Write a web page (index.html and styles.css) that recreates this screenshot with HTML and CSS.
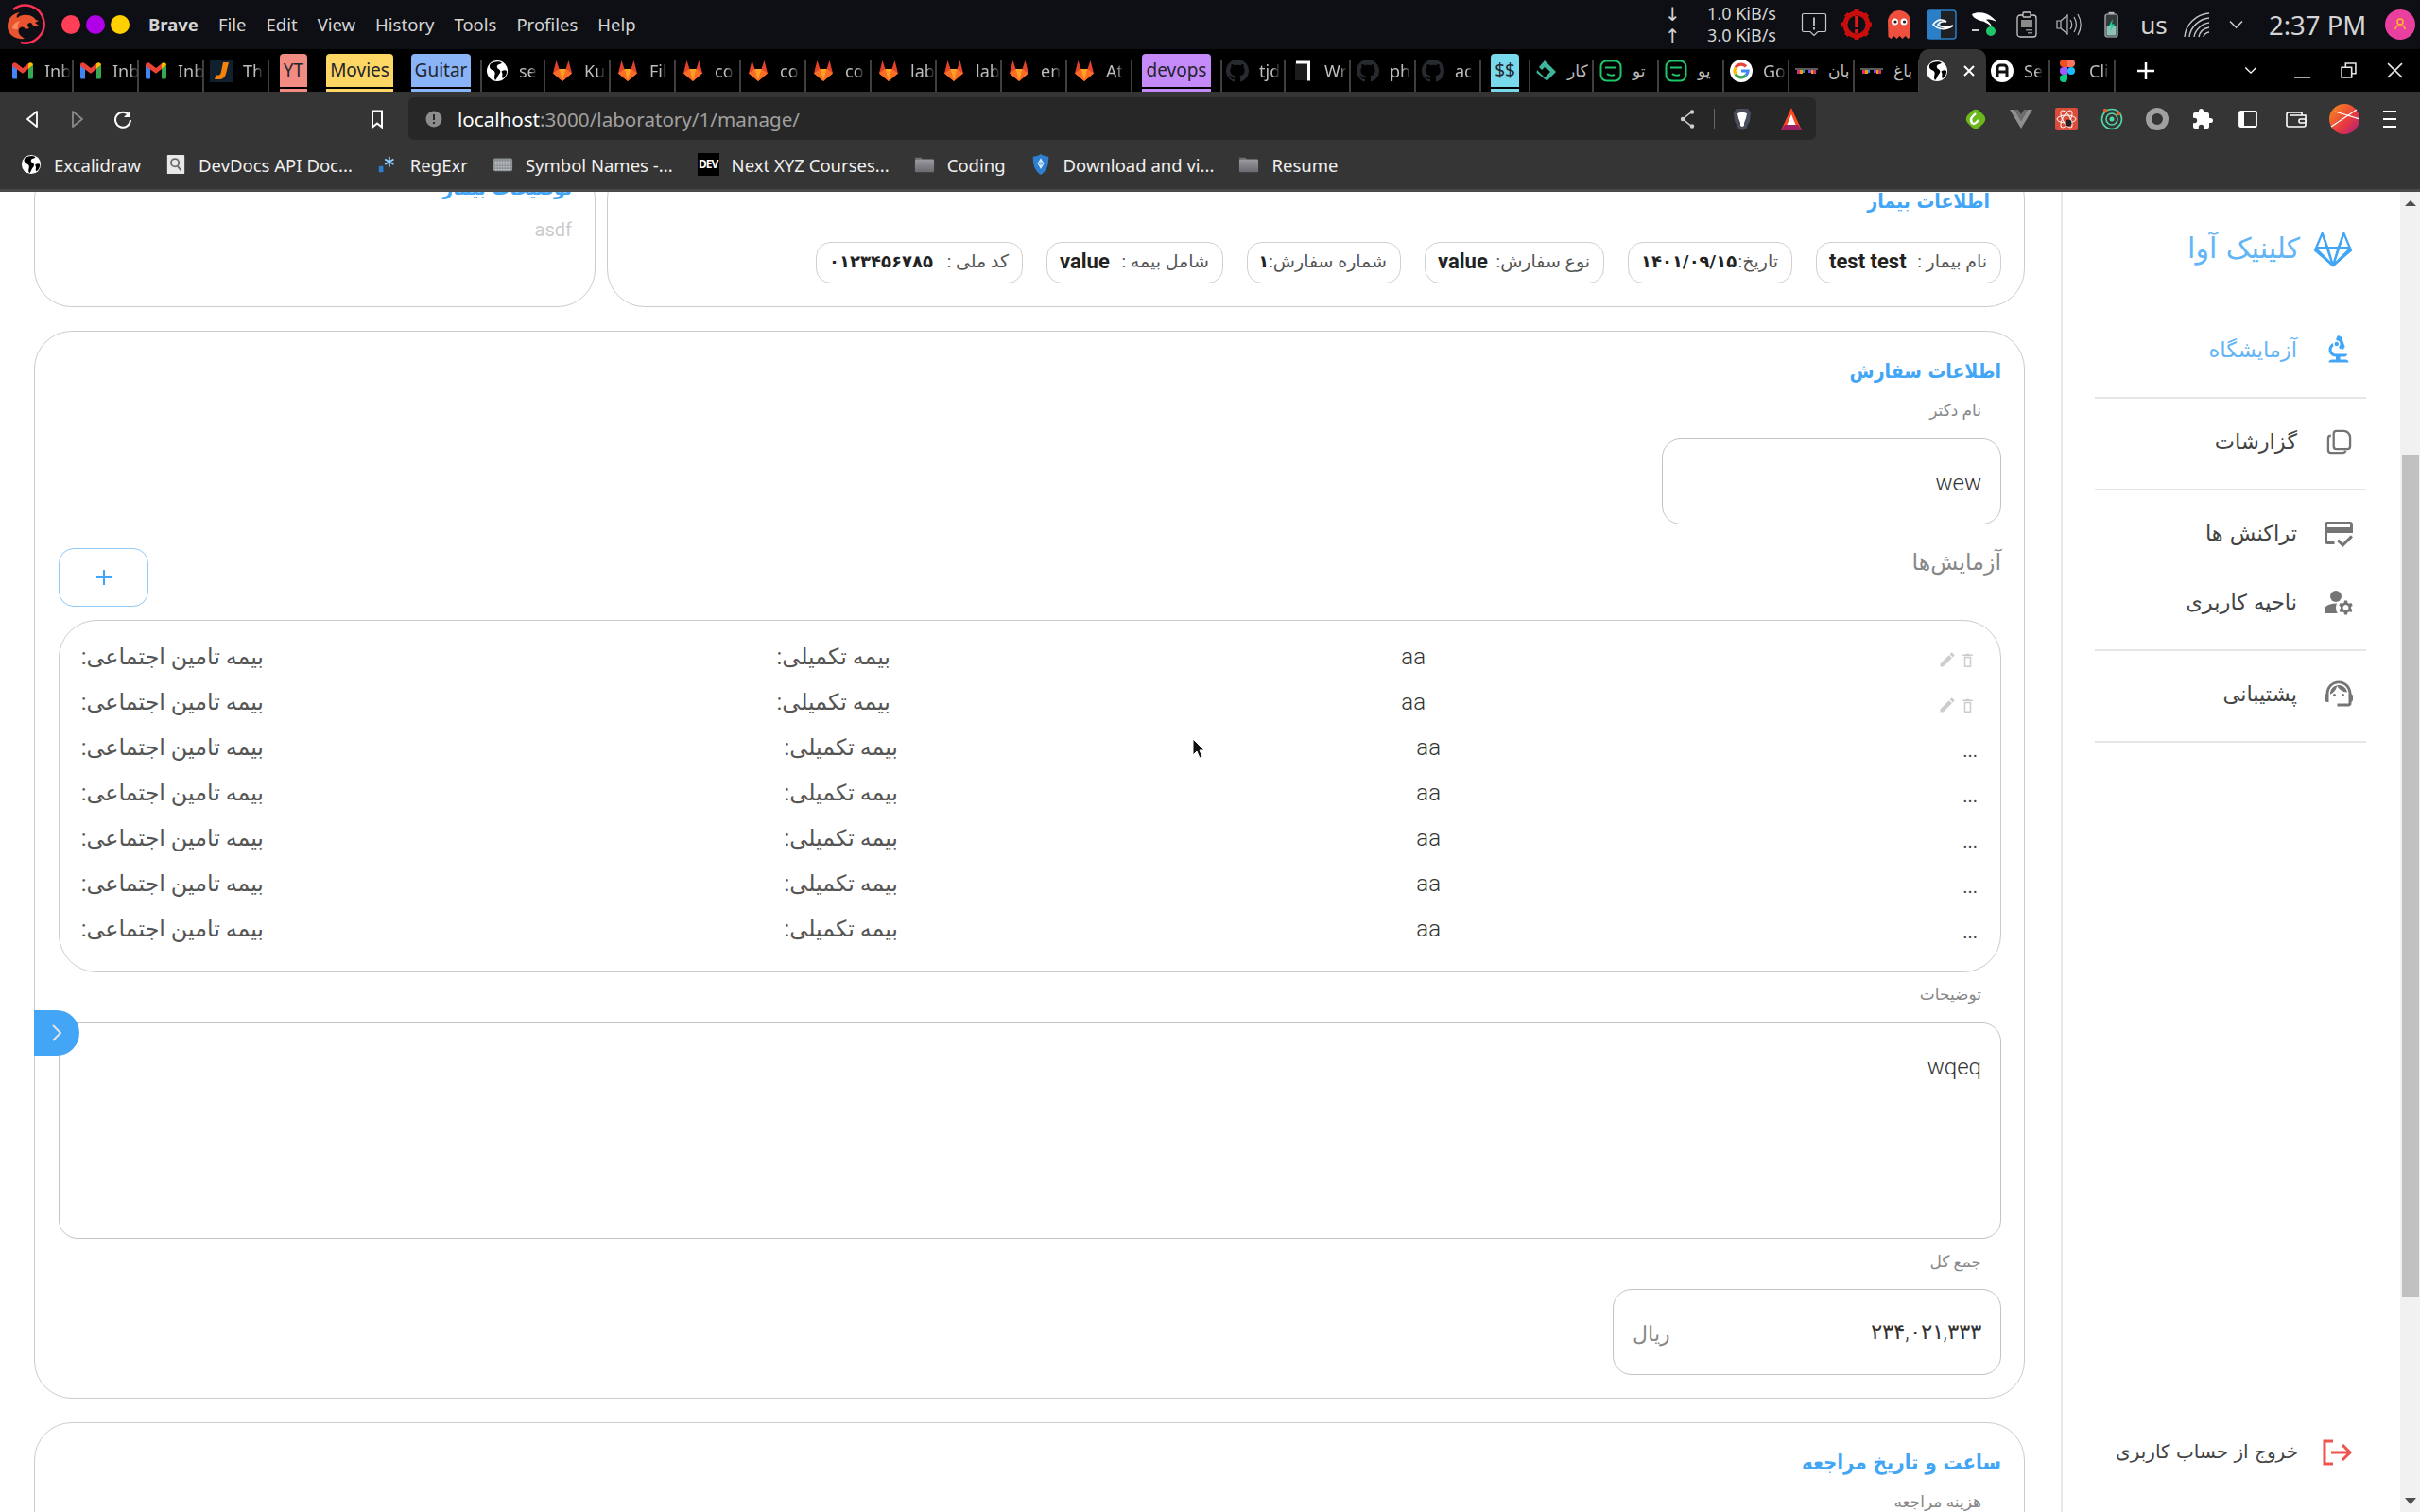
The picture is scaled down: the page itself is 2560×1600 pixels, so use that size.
FILE: index.html
```html
<!DOCTYPE html>
<html lang="fa">
<head>
<meta charset="utf-8">
<title>Laboratory</title>
<link rel="stylesheet" href="styles.css">
</head>
<body>
<svg class="defs" aria-hidden="true">
  <symbol id="gmail" viewBox="0 0 24 24"><path fill="#4285f4" d="M1 6v13a1.500 1.500 0 0 0 1.500 1.500H6V10z"/><path fill="#34a853" d="M23 6v13a1.500 1.500 0 0 1-1.500 1.500H18V10z"/><path fill="#ea4335" d="M1 6c0-2.500 2.500-3.500 4.500-2L12 9l6-4.800v5.800l-6 4.800L1 7z"/><path fill="#fbbc04" d="M18 4.200c2-1.800 5-.8 5 1.800L18 10z"/></symbol>
  <symbol id="gitlab" viewBox="0 0 24 24"><path fill="#e24329" d="M12 23 2 14.500 5.500 1 8.500 10h7L18.500 1 22 14.500z"/><path fill="#fc6d26" d="M2 14.500 8.500 10 12 23zM22 14.500 15.500 10 12 23z"/><path fill="#fca326" d="M8.500 10h7L12 23z"/></symbol>
  <symbol id="github" viewBox="0 0 16 16"><path fill="#272b30" d="M8 0C3.580 0 0 3.580 0 8c0 3.540 2.290 6.530 5.470 7.590.4.070.55-.17.55-.38 0-.19-.01-.82-.01-1.490-2.010.37-2.530-.49-2.690-.94-.09-.23-.48-.94-.82-1.130-.28-.15-.68-.52-.01-.53.63-.01 1.080.58 1.230.82.72 1.210 1.870.87 2.330.66.070-.52.28-.87.51-1.070-1.780-.2-3.640-.89-3.640-3.950 0-.87.31-1.590.82-2.150-.08-.2-.36-1.020.08-2.120 0 0 .67-.21 2.200.82.64-.18 1.320-.27 2-.27.68 0 1.360.09 2 .27 1.530-1.040 2.200-.82 2.200-.82.44 1.100.16 1.920.08 2.120.51.56.82 1.270.82 2.150 0 3.070-1.870 3.750-3.650 3.950.29.25.54.73.54 1.480 0 1.070-.01 1.930-.01 2.200 0 .21.15.46.55.38A8.013 8.013 0 0 0 16 8c0-4.420-3.580-8-8-8z"/></symbol>
  <symbol id="globe" viewBox="0 0 24 24"><circle cx="12" cy="12" r="11" fill="#fff"/><path fill="#000" d="M5 4.500C9 2 14 1.500 17 3.500c-1.500 2-4 1-5 3-.8 1.500.2 3 2 4 2 1 1.500 3.500 0 5-1.500 1.500-1.500 3-3 5.500-1 1.500-2 0-2-2 0-2 1-3.500.5-5.500-.5-2-3-2-4.500-3.500C3.500 8.500 3.500 6 5 4.500z"/><path fill="#000" d="M17 12c2-1 4-1 5 0 .3 3-1.500 6.500-4 8-1.500-1-.5-3-.5-4.500 0-1.500-1.500-2.500-.5-3.500z"/></symbol>
  <symbol id="jicon" viewBox="0 0 24 24"><rect width="24" height="24" fill="#10202f"/><path fill="#f5820b" d="M14 3h6l-3 12c-1 4-3.500 6-7 6H5l1.500-4.500c3 .5 4.500 0 5.300-3z"/></symbol>
  <symbol id="book" viewBox="0 0 24 24"><rect x="4" y="3" width="16" height="19" fill="#1c1c1c"/><path fill="#fff" d="M5 1.500h15v21h-3V4.500H5z"/></symbol>
  <symbol id="diamond" viewBox="0 0 24 24"><path fill="#3fb59b" d="M11 1l6 6-3.500 3.500-2.500-2.500-3 3-3-3zM3 11l3 3 5 5 6-6-3-3 3-3 6 6-9.500 9.500L2.500 14z"/></symbol>
  <symbol id="greenbox" viewBox="0 0 24 24"><rect x="1.500" y="1.500" width="21" height="21" rx="6" fill="none" stroke="#1fc66a" stroke-width="2"/><path d="M6 8.500h12M8 15c2 2 6 2 8 1" fill="none" stroke="#1fc66a" stroke-width="2"/></symbol>
  <symbol id="google" viewBox="0 0 24 24"><circle cx="12" cy="12" r="12" fill="#fff"/><path d="M17 7.300A7 7 0 0 0 6 8.500" fill="none" stroke="#ea4335" stroke-width="3.200"/><path d="M6 8.500a7 7 0 0 0 0 7" fill="none" stroke="#fbbc05" stroke-width="3.200"/><path d="M6 15.500a7 7 0 0 0 11 1.200" fill="none" stroke="#34a853" stroke-width="3.200"/><path d="M17 16.700A7 7 0 0 0 19 12h-7" fill="none" stroke="#4285f4" stroke-width="3.200"/></symbol>
  <symbol id="glasses" viewBox="0 0 24 24"><path fill="#5a5a5a" d="M0 9h24v2H0z"/><path fill="#d6336c" d="M2 11h3v4H2z"/><path fill="#f59f00" d="M5 11h3v4H5z"/><path fill="#228be6" d="M8 11h2v3H8z"/><path fill="#7048e8" d="M14 11h3v3h-3z"/><path fill="#f59f00" d="M17 11h2v4h-2z"/><path fill="#d6336c" d="M19 11h3v4h-3z"/></symbol>
  <symbol id="acircle" viewBox="0 0 24 24"><circle cx="12" cy="12" r="12" fill="#fff"/><path d="M7 18V9a3 3 0 0 1 3-3h4a3 3 0 0 1 3 3v9M7 13h10" fill="none" stroke="#111" stroke-width="3"/></symbol>
  <symbol id="figma" viewBox="0 0 16 24"><path fill="#f24e1e" d="M4 0h4v8H4a4 4 0 0 1 0-8z"/><path fill="#ff7262" d="M8 0h4a4 4 0 0 1 0 8H8z"/><path fill="#a259ff" d="M4 8h4v8H4a4 4 0 0 1 0-8z"/><circle cx="12" cy="12" r="4" fill="#1abcfe"/><path fill="#0acf83" d="M4 16h4v4a4 4 0 1 1-4-4z"/></symbol>
  <symbol id="dragon" viewBox="0 0 44 44"><path d="M10 6A20 20 0 1 1 18 41" fill="none" stroke="#ff2f55" stroke-width="2.500"/><path fill="#e8542f" d="M4 24c0-9 6-14 13-15-3 2-4 4-3 6 3-3 8-4 11-3 4 0 7 2 9 5l3 1-4 2 4 3-6 0-2-3c-3 0-4 1-4 3l2 3-4 1c-1-2-3-3-5-2-3 1-3 5-1 8 2 2 4 3 5 4-9 1-18-4-18-13z"/><path fill="#ff8a5c" d="M9 26c1-5 4-7 8-8-2 3-3 6-2 9-2 0-4 0-6-1z"/></symbol>
  <symbol id="msg" viewBox="0 0 28 26"><path d="M3 1.500h22a1.500 1.500 0 0 1 1.500 1.500v16a1.500 1.500 0 0 1-1.500 1.500h-7L14 24.500l-4-4H3A1.500 1.500 0 0 1 1.500 19V3A1.500 1.500 0 0 1 3 1.500z" fill="none" stroke="#c8c8c8" stroke-width="1.200"/><path d="M14 5.500v9M14 16v2.500" stroke="#ddd" stroke-width="1.600"/></symbol>
  <symbol id="redgear" viewBox="0 0 34 34"><circle cx="17" cy="17" r="12" fill="none" stroke="#c80d0d" stroke-width="5"/><path d="M17 1v5M17 28v5M1 17h5M28 17h5M5.700 5.700l3.500 3.500M24.800 24.800l3.500 3.500M5.700 28.300l3.500-3.500M24.800 9.200l3.500-3.500" stroke="#c80d0d" stroke-width="5"/><path d="M17 8v12M17 22v4" stroke="#e81414" stroke-width="3.600"/></symbol>
  <symbol id="ghost" viewBox="0 0 24 30"><path fill="#ef4f3f" d="M0 12a12 12 0 0 1 24 0v16l-2.500 2-3-3-3 3-3-3-3 3-3-3-3 3-3-2z"/><circle cx="7.500" cy="12" r="3.500" fill="#fff"/><circle cx="17" cy="12" r="3.500" fill="#fff"/><circle cx="8" cy="12" r="1.600" fill="#222"/><circle cx="17.500" cy="12" r="1.600" fill="#222"/></symbol>
  <symbol id="nvidia" viewBox="0 0 32 32"><rect x="1" y="1" width="30" height="30" rx="3" fill="#1f2024" stroke="#2a7fc7" stroke-width="1.500"/><path fill="#2a7fc7" d="M3 1h12v30H3a2 2 0 0 1-2-2V3a2 2 0 0 1 2-2z"/><path d="M7 16c4-6 10-6 14-3-3-1-7 0-9 3 3 3 8 4 16 1-7 5-15 5-21-1z" fill="none" stroke="#fff" stroke-width="1.600"/></symbol>
  <symbol id="gnome" viewBox="0 0 30 28"><path fill="#fff" d="M2 3c6-3 16-2 21 3 2 2 4 3 5 5-4-2-8-3-11-2 3 2 5 4 6 7-4-3-9-6-12-6C7 8 3 7 2 3z"/><rect x="2" y="19" width="8" height="2" fill="#ccc"/><circle cx="22" cy="21" r="5" fill="#1fc66a"/></symbol>
  <symbol id="clip" viewBox="0 0 22 28"><rect x="1" y="4" width="20" height="23" rx="3" fill="none" stroke="#c8c8c8" stroke-width="1.300"/><rect x="7" y="1" width="8" height="5" rx="1" fill="#111" stroke="#c8c8c8" stroke-width="1.300"/><path fill="#8a8a8a" d="M5 9h12v8H5zM10 19h7v1.500h-7zM12 22h5v1.500h-5z"/></symbol>
  <symbol id="speaker" viewBox="0 0 28 26"><path d="M1 9h4v8H1zM5 9l7-6v20l-7-6" fill="none" stroke="#bbb" stroke-width="1.200"/><path d="M15 8c2 3 2 7 0 10M19 5c3 5 3 11 0 16M23 2c4 7 4 15 0 22" fill="none" stroke="#bbb" stroke-width="1.200"/></symbol>
  <symbol id="battery" viewBox="0 0 15 28"><rect x="1" y="3" width="13" height="24" rx="2" fill="#333b3a" stroke="#bdbdbd" stroke-width="1.200"/><rect x="4.500" y=".8" width="6" height="2" fill="#bdbdbd"/><rect x="2.500" y="16" width="10" height="9.500" fill="#8fbfb6"/><path fill="#16d68f" d="M9 8 4.500 16h3l-1.500 6 5-8.500H8z"/></symbol>
  <symbol id="wifi" viewBox="0 0 28 27"><path d="M1 26C2 13 13 2 27 1M6 26C7 16 16 7 27 6M11 26c1-7 8-14 16-15M16 26c1-5 5-9 11-10M21 26c0-2 3-5 6-5" fill="none" stroke="#c4c4c4" stroke-width="1.400"/></symbol>
  <symbol id="chev" viewBox="0 0 16 10"><path d="M1.500 1.500 8 8l6.500-6.500" fill="none" stroke="currentColor" stroke-width="1.600"/></symbol>
  <symbol id="av" viewBox="0 0 32 32"><circle cx="16" cy="16" r="16" fill="#e9409f"/><circle cx="16" cy="13" r="3" fill="none" stroke="#ffb52e" stroke-width="1.600"/><path d="M11 21c0-3 2-4 5-4s5 1 5 4" fill="none" stroke="#ffb52e" stroke-width="1.600"/></symbol>
  <symbol id="back" viewBox="0 0 14 20"><path d="M12 2v16L2 10z" fill="none" stroke="currentColor" stroke-width="1.800" stroke-linejoin="round"/></symbol>
  <symbol id="fwd" viewBox="0 0 14 20"><path d="M2 2v16l10-8z" fill="none" stroke="currentColor" stroke-width="1.800" stroke-linejoin="round"/></symbol>
  <symbol id="reload" viewBox="0 0 20 20"><path d="M16.500 6A8 8 0 1 0 18 11" fill="none" stroke="currentColor" stroke-width="2"/><path fill="currentColor" d="M18 1v7h-7z"/></symbol>
  <symbol id="bm" viewBox="0 0 14 20"><path d="M2 1.500h10v17l-5-4-5 4z" fill="none" stroke="#fff" stroke-width="2"/></symbol>
  <symbol id="info" viewBox="0 0 18 18"><circle cx="9" cy="9" r="8.500" fill="#8d8d8d"/><path d="M9 4v6M9 12v2" stroke="#272727" stroke-width="2"/></symbol>
  <symbol id="share" viewBox="0 0 16 20"><path d="M13 2 3 10l10 8" fill="none" stroke="#cfcfcf" stroke-width="1.600"/><circle cx="13" cy="2.500" r="2.200" fill="#cfcfcf"/><circle cx="3" cy="10" r="2.200" fill="#cfcfcf"/><circle cx="13" cy="17.500" r="2.200" fill="#cfcfcf"/></symbol>
  <symbol id="lion" viewBox="0 0 20 24"><path fill="#4a4d5c" d="M4 1h12l3 4-1 9-4 8-4 2-4-2-4-8L1 5z"/><path fill="#fff" d="M5 6l3-1h4l3 1-1 5-2 5v3l-2 1-2-1v-3L6 11z"/></symbol>
  <symbol id="bat" viewBox="0 0 22 24"><path fill="#ff4724" d="M11 0 22 24H0z"/><path fill="#9e1f63" d="M0 24h22l-4-6H4z"/><path fill="#fff" d="M11 7l4.500 11h-9z"/></symbol>
  <symbol id="magnet" viewBox="0 0 24 24"><rect x="3" y="3" width="18" height="18" rx="6" transform="rotate(45 12 12)" fill="#6cb81d"/><path d="M9 17c-3-3-2-6 0-8l3-3M15 13l-3 3c-1 1-2 1-3 1" fill="none" stroke="#fff" stroke-width="2.400"/></symbol>
  <symbol id="vue" viewBox="0 0 24 22"><path fill="#8f8f8f" d="M0 1h5l7 12 7-12h5L12 21z"/><path fill="#6d6d6d" d="M5 1h4l3 5 3-5h4l-7 12z"/></symbol>
  <symbol id="atom" viewBox="0 0 24 24"><rect width="24" height="24" rx="2" fill="#db4c3a"/><g fill="none" stroke="#fff" stroke-width="1"><ellipse cx="12" cy="12" rx="10" ry="4"/><ellipse cx="12" cy="12" rx="10" ry="4" transform="rotate(60 12 12)"/><ellipse cx="12" cy="12" rx="10" ry="4" transform="rotate(120 12 12)"/></g><circle cx="14" cy="16" r="3.500" fill="#222"/></symbol>
  <symbol id="target" viewBox="0 0 24 24"><g fill="none" stroke="#4dd8a5" stroke-width="1.600"><circle cx="12" cy="12" r="10.500"/><circle cx="12" cy="12" r="6"/></g><circle cx="12" cy="12" r="2.500" fill="#4dd8a5"/><circle cx="5" cy="3" r="2.200" fill="#e2622f"/><circle cx="19" cy="6" r="2.200" fill="#e2622f"/></symbol>
  <symbol id="ring" viewBox="0 0 24 24"><circle cx="12" cy="12" r="9" fill="none" stroke="#a0a0a0" stroke-width="6"/></symbol>
  <symbol id="puzzle" viewBox="0 0 24 24"><path fill="#fff" d="M20.500 11H19V7a2 2 0 0 0-2-2h-4V3.500a2.500 2.500 0 0 0-5 0V5H4a2 2 0 0 0-2 2v3.800h1.500a2.700 2.700 0 0 1 0 5.400H2V20a2 2 0 0 0 2 2h3.800v-1.500a2.700 2.700 0 0 1 5.400 0V22H17a2 2 0 0 0 2-2v-4h1.500a2.500 2.500 0 0 0 0-5z"/></symbol>
  <symbol id="panel" viewBox="0 0 20 18"><rect x="1" y="1" width="18" height="16" rx="1.500" fill="none" stroke="#fff" stroke-width="1.800"/><rect x="1" y="1" width="5" height="16" fill="#fff"/></symbol>
  <symbol id="wallet" viewBox="0 0 22 20"><path d="M3 3h14v3M3 3a2 2 0 0 0-2 2v11a2 2 0 0 0 2 2h16a2 2 0 0 0 2-2V6H4" fill="none" stroke="#fff" stroke-width="1.600"/><rect x="14" y="10" width="7" height="4" rx="1.500" fill="#353535" stroke="#fff" stroke-width="1.600"/></symbol>
  <symbol id="ball" viewBox="0 0 32 32"><defs><linearGradient id="ballg" x1="0" y1="0" x2="1" y2="1"><stop offset="0" stop-color="#f7931e"/><stop offset=".6" stop-color="#e8373f"/><stop offset="1" stop-color="#a51f8c"/></linearGradient></defs><circle cx="16" cy="16" r="16" fill="url(#ballg)"/><path d="M2 24 29 6M6 8l26 8" stroke="#fff" stroke-width="1.200" fill="none"/></symbol>
  <symbol id="burger" viewBox="0 0 14 20"><path d="M0 2h14M0 10h14M0 18h14" stroke="#fff" stroke-width="2"/></symbol>
  <symbol id="devdocs" viewBox="0 0 24 24"><rect x="2" y="1" width="20" height="22" rx="1" fill="#e8e8e8"/><circle cx="11" cy="10" r="4.500" fill="none" stroke="#6a6a6a" stroke-width="2"/><path d="M14 14l4 5" stroke="#6a6a6a" stroke-width="2"/></symbol>
  <symbol id="regex" viewBox="0 0 24 24"><rect x="2" y="14" width="5" height="7" fill="#2f7fd1"/><path d="M14 3v12M9 6l10 6M19 6 9 12" stroke="#8fd0ff" stroke-width="2"/></symbol>
  <symbol id="keyb" viewBox="0 0 24 24"><rect x="1" y="5" width="22" height="15" rx="2" fill="#8e9396"/><path d="M3 9h18M3 12h18M3 15h18M3 18h18" stroke="#d0d4d6" stroke-width="1" stroke-dasharray="2 1"/></symbol>
  <symbol id="folder" viewBox="0 0 24 24"><defs><linearGradient id="folderg" x1="0" y1="0" x2="0" y2="1"><stop offset="0" stop-color="#9a9a9f"/><stop offset="1" stop-color="#6a6a70"/></linearGradient></defs><path fill="#6f6f74" d="M1 4h7l2 2H1z"/><rect x="1" y="6" width="22" height="15" rx="1.500" fill="url(#folderg)"/></symbol>
  <symbol id="shield" viewBox="0 0 20 24"><path fill="#2f7fd1" d="M10 0c3 2 6 3 9 3 0 8-1 16-9 21C2 19 1 11 1 3c3 0 6-1 9-3z"/><path d="M10 6v10M7 11l3-5 3 5-3 5z" fill="none" stroke="#d5ecff" stroke-width="1.400"/></symbol>
  <symbol id="fox" viewBox="0 0 44 40"><g fill="none" stroke="currentColor" stroke-width="2.400" stroke-linejoin="round"><path d="M22 38 2 21 10 2l6 16h12l6-16 8 19z"/><path d="M3 18h38M16 18l6 20 6-20M3 19l19 19 19-19M10 2l12 36M34 2 22 38"/></g></symbol>
  <symbol id="micro" viewBox="0 0 24 24"><path d="M7 19c-1.100 0-2 .9-2 2h14c0-1.100-.9-2-2-2h-4v-2h3c1.100 0 2-.9 2-2h-8c-1.660 0-3-1.340-3-3 0-1.090.59-2.040 1.460-2.560C8.170 9.030 8 8.540 8 8c0-.21.040-.42.090-.62C6.280 8.130 5 9.920 5 12c0 2.760 2.240 5 5 5v2H7z"/><path d="M10.560 5.510C11.910 5.540 13 6.640 13 8c0 .75-.33 1.410-.85 1.870l.59 1.620.94-.34.34.94 1.880-.68-.34-.94.94-.34-2.740-7.520-.94.34-.34-.94-1.880.68.34.94-.94.35.56 1.530z"/><circle cx="10.500" cy="8" r="1.500"/></symbol>
  <symbol id="copy" viewBox="0 0 28 28"><g fill="none" stroke="currentColor" stroke-width="2.400"><path d="M11 2h8a7 7 0 0 1 7 7v10a3 3 0 0 1-3 3H11a3 3 0 0 1-3-3V5a3 3 0 0 1 3-3z"/><path d="M5 7a3 3 0 0 0-3 3v13a3 3 0 0 0 3 3h13a3 3 0 0 0 3-2.500"/></g></symbol>
  <symbol id="card" viewBox="0 0 24 24"><path d="M20 4H4C2.890 4 2.010 4.890 2.010 6L2 18c0 1.110.89 2 2 2h5v-2H4v-6h18V6C22 4.890 21.110 4 20 4zm0 4H4V6h16v2zm-5.070 11.170-2.830-2.830-1.410 1.410L14.930 22 22 14.930l-1.410-1.410-5.660 5.650z"/></symbol>
  <symbol id="usergear" viewBox="0 0 24 24"><path d="M10.670 13.020C10.450 13.010 10.230 13 10 13c-2.420 0-4.680.67-6.610 1.820C2.510 15.340 2 16.320 2 17.350V20h9.260c-.79-1.130-1.260-2.510-1.260-4 0-1.070.25-2.070.67-2.980z"/><circle cx="10" cy="8" r="4"/><path d="M20.750 16c0-.22-.03-.42-.06-.63l1.140-1.010-1-1.730-1.450.49c-.32-.27-.68-.48-1.080-.63L18 11h-2l-.3 1.490c-.4.15-.76.36-1.080.63l-1.450-.49-1 1.730 1.140 1.010c-.03.21-.06.41-.06.63s.03.42.06.63l-1.140 1.010 1 1.730 1.450-.49c.32.27.68.48 1.080.63L16 21h2l.3-1.490c.4-.15.76-.36 1.080-.63l1.450.49 1-1.730-1.140-1.010c.03-.21.06-.41.06-.63zM17 18c-1.100 0-2-.9-2-2s.9-2 2-2 2 .9 2 2-.9 2-2 2z"/></symbol>
  <symbol id="agent" viewBox="0 0 24 24"><path d="M21 12.220C21 6.730 16.740 3 12 3c-4.690 0-9 3.650-9 9.280-.6.34-1 .98-1 1.720v2c0 1.100.9 2 2 2h1v-6.100c0-3.870 3.130-7 7-7s7 3.130 7 7V19h-8v2h8c1.100 0 2-.9 2-2v-1.220c.59-.31 1-.92 1-1.640v-2.300c0-.7-.41-1.310-1-1.620z"/><circle cx="9" cy="13" r="1"/><circle cx="15" cy="13" r="1"/><path d="M18 11.030C17.520 8.180 15.040 6 12.050 6c-3.030 0-6.290 2.510-6.030 6.450 2.470-1.010 4.330-3.210 4.860-5.890 1.310 2.630 4 4.440 7.120 4.470z"/></symbol>
  <symbol id="logout" viewBox="0 0 32 28"><g fill="none" stroke="#ef5350" stroke-width="3"><path d="M11 2H2v24h9"/><path d="M9 14h20M21 6l8 8-8 8"/></g></symbol>
  <symbol id="pencil" viewBox="0 0 24 24"><path d="M3 17.250V21h3.750L17.810 9.940l-3.750-3.750L3 17.250zM20.710 7.040c.39-.39.39-1.020 0-1.410l-2.340-2.340c-.39-.39-1.020-.39-1.410 0l-1.830 1.830 3.750 3.750 1.830-1.830z"/></symbol>
  <symbol id="trash" viewBox="0 0 14 20"><path d="M2 5h10v15H2zM4 7v11h6V7zM0 2h4l1-1h4l1 1h4v2H0z" fill-rule="evenodd"/></symbol>
  <symbol id="pointer" viewBox="0 0 14 22"><path d="M1 1v17l4-4 3 7 3-1-3-7h5z" fill="#111" stroke="#fff" stroke-width="1"/></symbol>
</svg>

<header class="topbar">
  <svg class="dragon"><use href="#dragon"/></svg>
  <div class="lights"><i class="light light-red"></i><i class="light light-purple"></i><i class="light light-yellow"></i></div>
  <nav class="menu"><b>Brave</b><span>File</span><span>Edit</span><span>View</span><span>History</span><span>Tools</span><span>Profiles</span><span>Help</span></nav>
  <div class="tray">
    <div class="speed">
      <div class="speed-row"><span class="speed-arrow">↓</span><span>1.0 KiB/s</span></div>
      <div class="speed-row"><span class="speed-arrow">↑</span><span>3.0 KiB/s</span></div>
    </div>
    <div class="tray-cell"><svg class="t-msg"><use href="#msg"/></svg></div>
    <div class="tray-cell"><svg class="t-gear"><use href="#redgear"/></svg></div>
    <div class="tray-cell"><svg class="t-ghost"><use href="#ghost"/></svg></div>
    <div class="tray-cell"><svg class="t-nvidia"><use href="#nvidia"/></svg></div>
    <div class="tray-cell"><svg class="t-gnome"><use href="#gnome"/></svg></div>
    <div class="tray-cell"><svg class="t-clip"><use href="#clip"/></svg></div>
    <div class="tray-cell"><svg class="t-speaker"><use href="#speaker"/></svg></div>
    <div class="tray-cell"><svg class="t-battery"><use href="#battery"/></svg></div>
    <div class="tray-cell tray-lang">us</div>
    <div class="tray-cell"><svg class="t-wifi"><use href="#wifi"/></svg></div>
    <svg class="t-chev"><use href="#chev"/></svg>
    <div class="clock">2:37 PM</div>
    <svg class="t-av"><use href="#av"/></svg>
  </div>
</header>

<div class="tabstrip">
  <div class="tab tab-lead"><svg class="fav"><use href="#gmail"/></svg><span class="tab-t">Inb</span></div>
  <div class="tab"><svg class="fav"><use href="#gmail"/></svg><span class="tab-t">Inb</span></div>
  <div class="tab"><svg class="fav"><use href="#gmail"/></svg><span class="tab-t">Inb</span></div>
  <div class="tab"><svg class="fav"><use href="#jicon"/></svg><span class="tab-t">Th</span></div>
  <div class="chip chip-yt">YT</div>
  <div class="chip chip-movies">Movies</div>
  <div class="chip chip-guitar">Guitar</div>
  <div class="tab tab-first"><svg class="fav"><use href="#globe"/></svg><span class="tab-t">se</span></div>
  <div class="tab"><svg class="fav"><use href="#gitlab"/></svg><span class="tab-t">Ku</span></div>
  <div class="tab"><svg class="fav"><use href="#gitlab"/></svg><span class="tab-t">Fil</span></div>
  <div class="tab"><svg class="fav"><use href="#gitlab"/></svg><span class="tab-t">co</span></div>
  <div class="tab"><svg class="fav"><use href="#gitlab"/></svg><span class="tab-t">co</span></div>
  <div class="tab"><svg class="fav"><use href="#gitlab"/></svg><span class="tab-t">co</span></div>
  <div class="tab"><svg class="fav"><use href="#gitlab"/></svg><span class="tab-t">lab</span></div>
  <div class="tab"><svg class="fav"><use href="#gitlab"/></svg><span class="tab-t">lab</span></div>
  <div class="tab"><svg class="fav"><use href="#gitlab"/></svg><span class="tab-t">en</span></div>
  <div class="tab"><svg class="fav"><use href="#gitlab"/></svg><span class="tab-t">At</span></div>
  <div class="chip chip-devops">devops</div>
  <div class="tab tab-first"><svg class="fav"><use href="#github"/></svg><span class="tab-t">tjd</span></div>
  <div class="tab"><svg class="fav"><use href="#book"/></svg><span class="tab-t">Wr</span></div>
  <div class="tab"><svg class="fav"><use href="#github"/></svg><span class="tab-t">ph</span></div>
  <div class="tab"><svg class="fav"><use href="#github"/></svg><span class="tab-t">ac</span></div>
  <div class="chip chip-money">$$</div>
  <div class="tab tab-first"><svg class="fav"><use href="#diamond"/></svg><span class="tab-t tab-fa" dir="rtl">کار</span></div>
  <div class="tab"><svg class="fav"><use href="#greenbox"/></svg><span class="tab-t tab-fa" dir="rtl">تو</span></div>
  <div class="tab"><svg class="fav"><use href="#greenbox"/></svg><span class="tab-t tab-fa" dir="rtl">یو</span></div>
  <div class="tab"><svg class="fav"><use href="#google"/></svg><span class="tab-t">Go</span></div>
  <div class="tab"><svg class="fav"><use href="#glasses"/></svg><span class="tab-t tab-fa" dir="rtl">بان</span></div>
  <div class="tab"><svg class="fav"><use href="#glasses"/></svg><span class="tab-t tab-fa" dir="rtl">باغ</span></div>
  <div class="tab tab-active"><svg class="fav"><use href="#globe"/></svg><svg class="tab-x" viewBox="0 0 14 14"><path d="M2 2l10 10M12 2 2 12"/></svg></div>
  <div class="tab"><svg class="fav"><use href="#acircle"/></svg><span class="tab-t">Se</span></div>
  <div class="tab"><svg class="fav fav-figma"><use href="#figma"/></svg><span class="tab-t">Cli</span></div>
  <svg class="win-plus" viewBox="0 0 18 18"><path d="M9 0v18M0 9h18"/></svg>
  <div class="win">
    <svg class="win-chev"><use href="#chev"/></svg>
    <svg class="win-btn" viewBox="0 0 16 16"><path d="M0 15h16"/></svg>
    <svg class="win-btn" viewBox="0 0 16 16"><path d="M1 5h10v10H1zM5 5V1h10v10h-4"/></svg>
    <svg class="win-btn" viewBox="0 0 16 16"><path d="M1 1l14 14M15 1 1 15"/></svg>
  </div>
</div>

<div class="toolbar">
  <div class="tool"><svg class="ic-back"><use href="#back"/></svg></div>
  <div class="tool tool-off"><svg class="ic-back"><use href="#fwd"/></svg></div>
  <div class="tool"><svg class="ic-reload"><use href="#reload"/></svg></div>
  <div class="tool tool-bm"><svg class="ic-back"><use href="#bm"/></svg></div>
  <div class="urlbar">
    <svg class="ic-info"><use href="#info"/></svg>
    <span class="url"><span class="url-host">localhost</span>:3000/laboratory/1/manage/</span>
    <div class="url-end">
      <svg class="ic-share"><use href="#share"/></svg>
      <i class="url-div"></i>
      <svg class="ic-lion"><use href="#lion"/></svg>
      <svg class="ic-bat"><use href="#bat"/></svg>
    </div>
  </div>
  <div class="exts">
    <div class="tool"><svg class="ext"><use href="#magnet"/></svg></div>
    <div class="tool"><svg class="ext"><use href="#vue"/></svg></div>
    <div class="tool"><svg class="ext"><use href="#atom"/></svg></div>
    <div class="tool"><svg class="ext"><use href="#target"/></svg></div>
    <div class="tool"><svg class="ext"><use href="#ring"/></svg></div>
    <div class="tool"><svg class="ext"><use href="#puzzle"/></svg></div>
    <div class="tool"><svg class="ext ext-s"><use href="#panel"/></svg></div>
    <div class="tool tool-gap"><svg class="ext ext-w"><use href="#wallet"/></svg></div>
    <div class="tool tool-gap"><svg class="ext-ball"><use href="#ball"/></svg></div>
    <div class="tool"><svg class="ext-burger"><use href="#burger"/></svg></div>
  </div>
</div>

<div class="bookmarks">
  <div class="bm"><svg class="bm-ic"><use href="#globe"/></svg><span>Excalidraw</span></div>
  <div class="bm"><svg class="bm-ic"><use href="#devdocs"/></svg><span>DevDocs API Doc...</span></div>
  <div class="bm"><svg class="bm-ic"><use href="#regex"/></svg><span>RegExr</span></div>
  <div class="bm"><svg class="bm-ic"><use href="#keyb"/></svg><span>Symbol Names -...</span></div>
  <div class="bm"><span class="dev">DEV</span><span>Next XYZ Courses...</span></div>
  <div class="bm"><svg class="bm-ic"><use href="#folder"/></svg><span>Coding</span></div>
  <div class="bm"><svg class="bm-ic"><use href="#shield"/></svg><span>Download and vi...</span></div>
  <div class="bm"><svg class="bm-ic"><use href="#folder"/></svg><span>Resume</span></div>
</div>

<div class="page">
  <main class="main" dir="rtl">
    <div class="toprow">
      <section class="card card-patient">
        <h2 class="title title-patient">اطلاعات بیمار</h2>
        <div class="chips">
          <div class="pill pill-name"><span>نام بیمار :</span><b>test test</b></div>
          <div class="pill pill-date"><span>تاریخ:</span><b class="num num-date">۱۴۰۱/۰۹/۱۵</b></div>
          <div class="pill pill-type"><span>نوع سفارش:</span><b>value</b></div>
          <div class="pill pill-order"><span>شماره سفارش:</span><b class="num">۱</b></div>
          <div class="pill pill-ins"><span>شامل بیمه :</span><b>value</b></div>
          <div class="pill pill-code"><span>کد ملی :</span><b class="num">۰۱۲۳۴۵۶۷۸۵</b></div>
        </div>
      </section>
      <section class="card card-desc">
        <h2 class="title">توضیحات بیمار</h2>
        <p class="desc-text">asdf</p>
      </section>
    </div>

    <section class="card card-order">
      <h2 class="title">اطلاعات سفارش</h2>
      <div class="label">نام دکتر</div>
      <div class="field field-doctor">wew</div>
      <div class="tests-head">
        <span class="tests-title">آزمایش‌ها</span>
        <button class="add" type="button"><svg viewBox="0 0 18 18"><path d="M9 1v16M1 9h16"/></svg></button>
      </div>
      <div class="list">
        <div class="row row-edit">
          <div class="row-act"><svg class="ic-trash"><use href="#trash"/></svg><svg class="ic-pencil"><use href="#pencil"/></svg></div>
          <div class="row-name">aa</div><div>بیمه تکمیلی:</div><div>بیمه تامین اجتماعی:</div>
        </div>
        <div class="row row-edit">
          <div class="row-act"><svg class="ic-trash"><use href="#trash"/></svg><svg class="ic-pencil"><use href="#pencil"/></svg></div>
          <div class="row-name">aa</div><div>بیمه تکمیلی:</div><div>بیمه تامین اجتماعی:</div>
        </div>
        <div class="row"><div class="row-more">...</div><div class="row-name">aa</div><div>بیمه تکمیلی:</div><div>بیمه تامین اجتماعی:</div></div>
        <div class="row"><div class="row-more">...</div><div class="row-name">aa</div><div>بیمه تکمیلی:</div><div>بیمه تامین اجتماعی:</div></div>
        <div class="row"><div class="row-more">...</div><div class="row-name">aa</div><div>بیمه تکمیلی:</div><div>بیمه تامین اجتماعی:</div></div>
        <div class="row"><div class="row-more">...</div><div class="row-name">aa</div><div>بیمه تکمیلی:</div><div>بیمه تامین اجتماعی:</div></div>
        <div class="row"><div class="row-more">...</div><div class="row-name">aa</div><div>بیمه تکمیلی:</div><div>بیمه تامین اجتماعی:</div></div>
      </div>
      <div class="label label-notes">توضیحات</div>
      <div class="field field-notes">wqeq</div>
      <div class="label label-total">جمع کل</div>
      <div class="field field-total"><span>۲۳۴,۰۲۱,۳۳۳</span><span class="unit">ریال</span></div>
    </section>

    <section class="card card-visit">
      <h2 class="title title-visit">ساعت و تاریخ مراجعه</h2>
      <div class="label">هزینه مراجعه</div>
    </section>

    <button class="drawer" type="button"><svg viewBox="0 0 12 20"><path d="M2 2l8 8-8 8"/></svg></button>
  </main>

  <aside class="side" dir="rtl">
    <div class="brand"><svg class="brand-ic"><use href="#fox"/></svg><span>کلینیک آوا</span></div>
    <div class="group group-first">
      <a class="item item-active"><svg class="item-ic"><use href="#micro"/></svg><span>آزمایشگاه</span></a>
    </div>
    <div class="group">
      <a class="item"><svg class="item-ic item-ic-s"><use href="#copy"/></svg><span>گزارشات</span></a>
    </div>
    <div class="group">
      <a class="item"><svg class="item-ic"><use href="#card"/></svg><span>تراکنش ها</span></a>
      <a class="item"><svg class="item-ic"><use href="#usergear"/></svg><span>ناحیه کاربری</span></a>
    </div>
    <div class="group">
      <a class="item"><svg class="item-ic"><use href="#agent"/></svg><span>پشتیبانی</span></a>
    </div>
    <a class="item item-logout"><svg class="item-ic item-ic-l"><use href="#logout"/></svg><span>خروج از حساب کاربری</span></a>
  </aside>

  <div class="scrollbar">
    <i class="sb-up"></i>
    <div class="sb-track"><div class="sb-thumb"></div></div>
    <i class="sb-down"></i>
  </div>
</div>

<svg class="cursor"><use href="#pointer"/></svg>
</body>
</html>
```
FILE: styles.css
```css
* { box-sizing: border-box; }
html, body { margin: 0; padding: 0; }
body {
  width: 2560px; height: 1600px; overflow: hidden; position: relative;
  display: flex; flex-direction: column;
  font-family: "Noto Sans", "DejaVu Sans", sans-serif; background: #fff;
}
.defs { position: absolute; width: 0; height: 0; }
svg { display: block; flex: none; }

/* Top system bar */
.topbar { height: 52px; background: #0d0f14; display: flex; align-items: center; color: #d4d4d4; font-size: 18.500px; }
.dragon { width: 44px; height: 44px; margin-left: 4px; }
.lights { display: flex; gap: 6px; margin-left: 17px; }
.light { width: 20px; height: 20px; border-radius: 50%; display: block; }
.light-red { background: #ff3f58; }
.light-purple { background: #b000e8; }
.light-yellow { background: #ffd000; }
.menu { display: flex; gap: 21px; margin-left: 20px; padding-bottom: 2px; }
.tray { margin-left: auto; display: flex; align-items: center; padding-right: 5px; }
.speed { width: 135px; font-size: 18px; line-height: 23px; }
.speed-row { display: flex; justify-content: space-between; padding-right: 17px; }
.speed-arrow { width: 14px; font-size: 20px; }
.tray-cell { width: 45px; display: flex; justify-content: center; }
.tray-lang { font-size: 26px; color: #d4d4d4; }
.t-msg { width: 28px; height: 26px; }
.t-gear { width: 34px; height: 34px; }
.t-ghost { width: 24px; height: 30px; }
.t-nvidia { width: 32px; height: 32px; }
.t-gnome { width: 30px; height: 28px; }
.t-clip { width: 22px; height: 28px; }
.t-speaker { width: 28px; height: 26px; }
.t-battery { width: 15px; height: 28px; }
.t-wifi { width: 28px; height: 27px; }
.t-chev { width: 17px; height: 10px; margin-left: 11px; color: #c8c8c8; }
.clock { font-size: 27.500px; margin-left: 26px; width: 108px; white-space: nowrap; }
.t-av { width: 32px; height: 32px; margin-left: 15px; }

/* Tabs */
.tabstrip { height: 45px; background: #000; display: flex; align-items: flex-end; padding-left: 9px; color: #bdbdbd; font-size: 18px; }
.tab { width: 69px; height: 34px; padding: 0 0 10px 6px; display: flex; align-items: center; border-right: 2px solid #3f3f3f; flex: none; }
.tab-lead { padding-left: 3px; }
.tab-first { border-left: 2px solid #3f3f3f; margin-left: 10px; padding-left: 4px; }
.fav { width: 24px; height: 24px; }
.fav-figma { width: 16px; height: 24px; margin: 0 4px; }
.tab-t { margin-left: 11px; max-width: 30px; white-space: nowrap; -webkit-mask-image: linear-gradient(90deg, #000 65%, transparent); mask-image: linear-gradient(90deg, #000 65%, transparent); }
.tab-fa { font-family: "DejaVu Sans", sans-serif; font-size: 17px; -webkit-mask-image: none; mask-image: none; }
.tab-active { height: 45px; width: 71px; background: #353535; border-right: 0; border-radius: 10px 10px 0 0; padding: 0 0 0 7px; margin-left: -1px; margin-right: -1px; }
.tab-x { width: 14px; height: 14px; margin-left: 15px; stroke: #fff; stroke-width: 2; fill: none; }
.chip { height: 40px; border-radius: 4px 4px 0 0; color: #24242c; font-size: 19px; line-height: 35px; text-align: center; flex: none; margin-left: 10px; }
.chip-yt { width: 29px; margin-left: 11px; background: linear-gradient(#f28b82 35px, #000 35px 37px, #f28b82 37px); }
.chip-movies { width: 71px; margin-left: 20px; background: linear-gradient(#fdd663 35px, #000 35px 37px, #fdd663 37px); }
.chip-guitar { width: 63px; margin-left: 19px; background: linear-gradient(#8ab4f8 35px, #000 35px 37px, #8ab4f8 37px); }
.chip-devops { width: 73px; background: linear-gradient(#c58af9 35px, #000 35px 37px, #c58af9 37px); }
.chip-money { width: 30px; background: linear-gradient(#78d9ec 35px, #000 35px 37px, #78d9ec 37px); }
.win-plus { width: 18px; height: 18px; margin: 0 0 13px 23px; stroke: #fff; stroke-width: 2.500; }
.win { margin-left: auto; height: 45px; display: flex; align-items: center; padding-right: 18px; }
.win-chev { width: 14px; height: 9px; color: #fff; margin-right: 39px; }
.win-btn { width: 17px; height: 17px; margin-right: 32px; fill: none; stroke: #e6e6e6; stroke-width: 1.500; }
.win-btn:last-child { margin-right: 0; }

/* Toolbar */
.toolbar { height: 57px; background: #353535; display: flex; align-items: center; padding-left: 10px; color: #fff; }
.tool { width: 48px; height: 48px; display: flex; align-items: center; justify-content: center; flex: none; }
.tool-off { color: #8a8a8a; }
.tool-bm { margin-left: 221px; }
.tool-gap { margin-left: 3px; }
.ic-back { width: 14px; height: 20px; }
.ic-reload { width: 20px; height: 20px; }
.urlbar { width: 1489px; height: 45px; margin-left: 9px; background: #272727; border-radius: 6px; display: flex; align-items: center; padding: 0 15px 0 18px; }
.ic-info { width: 18px; height: 18px; }
.url { margin-left: 16px; font-size: 20.600px; color: #a0a0a0; }
.url-host { color: #fff; }
.url-end { margin-left: auto; display: flex; align-items: center; }
.ic-share { width: 16px; height: 20px; }
.url-div { width: 1px; height: 22px; background: #666; margin: 0 19px 0 20px; display: block; }
.ic-lion { width: 20px; height: 24px; margin-right: 31px; }
.ic-bat { width: 22px; height: 24px; }
.exts { display: flex; margin-left: 145px; }
.ext { width: 24px; height: 24px; }
.ext-s { width: 20px; height: 18px; }
.ext-w { width: 22px; height: 20px; }
.ext-ball { width: 32px; height: 32px; }
.ext-burger { width: 14px; height: 20px; }

/* Bookmarks */
.bookmarks { height: 49px; background: #353535; border-bottom: 3px solid #4a4a4a; padding: 0 0 6px 22px; display: flex; align-items: center; gap: 26px; color: #f0f0f0; font-size: 18.500px; white-space: nowrap; }
.bm { display: flex; align-items: center; gap: 13px; }
.bm-ic { width: 22px; height: 22px; }
.dev { background: #000; color: #fff; font-weight: 700; font-size: 12px; width: 23px; height: 24px; line-height: 24px; text-align: center; letter-spacing: -1px; }

/* Page */
.page { flex: 1; min-height: 0; display: flex; }
.main { width: 2180px; position: relative; overflow: hidden; padding: 0 38px 0 36px; font-family: Roboto, "DejaVu Sans", sans-serif; color: #333; }
.toprow { display: flex; gap: 12px; margin-top: -33px; }
.card { border: 1px solid #ccc; border-radius: 40px; background: #fff; }
.title { margin: 0; font-family: "DejaVu Sans Condensed", "DejaVu Sans", sans-serif; font-size: 21px; line-height: 36px; font-weight: 700; color: #42a5f5; }
.title-patient { margin-right: 12px; }
.title-visit { font-size: 22px; }
.card-patient { width: 1500px; height: 155px; padding: 24px 24px 0; }
.card-desc { width: 594px; height: 155px; padding: 10px 24px 0; }
.chips { display: flex; gap: 25px; margin-top: 25px; }
.pill { height: 44px; border: 1px solid #d0d0d0; border-radius: 16px; display: flex; align-items: center; justify-content: space-between; padding: 0 14px 3px 13px; font-size: 19px; white-space: nowrap; }
.pill-name { width: 196px; }
.pill-date { width: 174px; }
.pill-type { width: 190px; }
.pill-order { width: 163px; }
.pill-ins { width: 187px; }
.pill-code { width: 219px; }
.pill span { color: #555; }
.pill b { color: #222; font-weight: 700; font-size: 22px; }
.pill b.num { font-size: 18px; }
.pill b.num-date { letter-spacing: -1.600px; }
.desc-text { margin: 14px 0 0; font-size: 20px; line-height: 24px; color: #ccc; }

.card-order { height: 1130px; margin-top: 25px; padding: 24px 24px 24px 25px; }
.label { font-size: 17px; line-height: 24px; color: #888; margin: 11px 21px 18px 0; }
.field { border: 1px solid #c4c4c4; border-radius: 20px; font-size: 24px; font-weight: 300; color: #333; }
.field-doctor { width: 359px; height: 91px; padding: 2px 20px 0; display: flex; align-items: center; }
.tests-head { display: flex; justify-content: space-between; margin-top: 25px; height: 62px; }
.tests-title { font-size: 23.700px; line-height: 30px; color: #888; }
.add { width: 95px; height: 62px; background: #fff; border: 1px solid #90caf9; border-radius: 16px; display: flex; align-items: center; justify-content: center; padding: 0; }
.add svg { width: 18px; height: 18px; stroke: #42a5f5; stroke-width: 2; }
.list { height: 373px; margin-top: 14px; border: 1px solid #ccc; border-radius: 40px; padding: 14px 24px 0; font-size: 23.800px; color: #555; }
.row { height: 48px; display: grid; grid-template-columns: 568px 574px 671px 1fr; align-items: center; white-space: nowrap; }
.row-edit { grid-template-columns: 584px 566px 663px 1fr; }
.row-act { display: flex; gap: 6px; padding: 6px 5px 0 0; }
.ic-pencil { width: 20px; height: 20px; fill: #ccc; }
.ic-trash { width: 11px; height: 15px; fill: #ccc; margin-top: 3px; }
.row-name { font-size: 24px; font-weight: 300; color: #333; }
.row-more { font-size: 20px; padding: 6px 0 0 0; color: #444; }
.label-notes { margin-top: 11px; }
.field-notes { height: 229px; padding: 26px 20px; line-height: 40px; }
.label-total { margin-top: 12px; margin-bottom: 17px; }
.field-total { width: 411px; height: 91px; padding: 0 20px; display: flex; justify-content: space-between; align-items: center; font-size: 23px; }
.unit { color: #888; font-size: 22px; padding-top: 4px; }
.card-visit { height: 200px; margin-top: 25px; padding: 24px; }
.drawer { position: absolute; left: 36px; top: 866px; width: 48px; height: 48px; border: 0; padding: 0; background: #42a5f5; border-radius: 0 24px 24px 0; display: flex; align-items: center; justify-content: center; }
.drawer svg { width: 12px; height: 20px; fill: none; stroke: #e3e3e3; stroke-width: 2; }

/* Sidebar */
.side { width: 359px; border-left: 2px solid #e8e8e8; display: flex; flex-direction: column; font-family: "DejaVu Sans", sans-serif; padding: 42px 0 39px; color: #444; }
.brand { height: 38px; display: flex; align-items: center; gap: 14px; padding-right: 50px; color: #64b5f6; font-size: 30px; }
.brand span { padding-bottom: 4px; }
.brand-ic { width: 42px; height: 38px; color: #42a5f5; }
.group { margin: 0 36px 0 34px; padding: 21px 0 26px; border-bottom: 2px solid #e5e5e5; display: flex; flex-direction: column; gap: 25px; }
.group-first { margin-top: 41px; padding-top: 22px; }
.item { height: 48px; display: flex; align-items: center; gap: 26px; padding-right: 11px; font-size: 22.500px; white-space: nowrap; }
.item-ic { width: 36px; height: 36px; fill: #757575; color: #757575; }
.item-ic-s { width: 27px; height: 27px; margin: 0 4px 0 5px; }
.item-ic-l { width: 32px; height: 28px; }
.item-active { color: #64b5f6; }
.item-active .item-ic { fill: #42a5f5; }
.item-logout { margin-top: auto; margin-right: 50px; padding-right: 0; font-size: 20px; }
.item-logout span { padding-bottom: 3px; }

/* Scrollbar */
.scrollbar { width: 21px; background: #f1f1f1; display: flex; flex-direction: column; align-items: center; }
.sb-up, .sb-down { display: block; width: 0; border-left: 6px solid transparent; border-right: 6px solid transparent; flex: none; }
.sb-up { border-bottom: 6px solid #505050; height: 6px; margin: 9px 0; }
.sb-down { border-top: 7px solid #505050; height: 7px; margin: 8px 0; }
.sb-track { flex: 1; width: 100%; }
.sb-thumb { width: 18px; height: 891px; margin: 255px 0 0 2px; background: #c1c1c1; }

.cursor { position: absolute; left: 1261px; top: 781px; width: 14px; height: 22px; }
```
